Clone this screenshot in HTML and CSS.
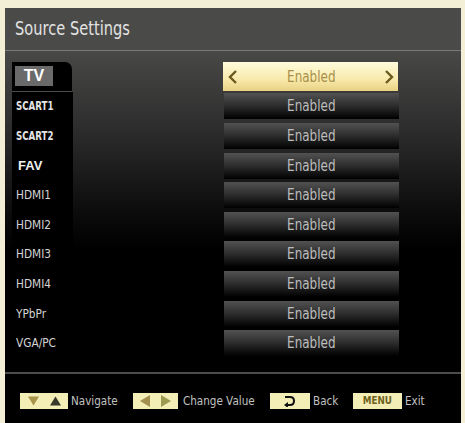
FILE: index.html
```html
<!DOCTYPE html>
<html lang="en">
<head>
  <meta charset="UTF-8">
  <title>Source Settings</title>
  <link rel="stylesheet" href="styles.css">
</head>
<body>
  <div class="screen">
    <div class="header"><span class="t">Source Settings</span></div>

    <div class="body">
      <div class="list">
        <div class="row">
          <div class="src first"><span class="tv">TV</span></div>
          <div class="val selected">
            <svg class="arrow" width="10" height="16" viewBox="0 0 10 16"><path d="M8 2 L2 8 L8 14" fill="none" stroke="#6b5a1e" stroke-width="2.4"/></svg>
            <span class="t">Enabled</span>
            <svg class="arrow" width="10" height="16" viewBox="0 0 10 16"><path d="M2 2 L8 8 L2 14" fill="none" stroke="#6b5a1e" stroke-width="2.4"/></svg>
          </div>
        </div>
        <div class="row">
          <div class="src bold"><span class="t">SCART1</span></div>
          <div class="val"><span class="t">Enabled</span></div>
        </div>
        <div class="row">
          <div class="src bold"><span class="t">SCART2</span></div>
          <div class="val"><span class="t">Enabled</span></div>
        </div>
        <div class="row">
          <div class="src wide">FAV</div>
          <div class="val"><span class="t">Enabled</span></div>
        </div>
        <div class="row">
          <div class="src"><span class="t">HDMI1</span></div>
          <div class="val"><span class="t">Enabled</span></div>
        </div>
        <div class="row">
          <div class="src"><span class="t">HDMI2</span></div>
          <div class="val"><span class="t">Enabled</span></div>
        </div>
        <div class="row">
          <div class="src"><span class="t">HDMI3</span></div>
          <div class="val"><span class="t">Enabled</span></div>
        </div>
        <div class="row">
          <div class="src"><span class="t">HDMI4</span></div>
          <div class="val"><span class="t">Enabled</span></div>
        </div>
        <div class="row">
          <div class="src"><span class="t">YPbPr</span></div>
          <div class="val"><span class="t">Enabled</span></div>
        </div>
        <div class="row">
          <div class="src"><span class="t">VGA/PC</span></div>
          <div class="val"><span class="t">Enabled</span></div>
        </div>
      </div>
    </div>

    <div class="footer">
      <div class="key k-nav">
        <svg width="11" height="10" viewBox="0 0 12 10"><path d="M0 0 H12 L6 10 Z" fill="#a8944a"/></svg>
        <svg width="11" height="10" viewBox="0 0 12 10"><path d="M0 10 H12 L6 0 Z" fill="#3a3828"/></svg>
      </div>
      <div class="hint h-nav"><span class="t">Navigate</span></div>

      <div class="key k-val">
        <svg width="10" height="12" viewBox="0 0 10 12"><path d="M10 0 V12 L0 6 Z" fill="#a39050"/></svg>
        <svg width="10" height="12" viewBox="0 0 10 12"><path d="M0 0 V12 L10 6 Z" fill="#9c9a50"/></svg>
      </div>
      <div class="hint h-val"><span class="t">Change Value</span></div>

      <div class="key k-back">
        <svg width="14" height="12" viewBox="0 0 14 12"><path d="M2 2 H7 Q11 2 11 6 Q11 10 7 10 H4" fill="none" stroke="#111" stroke-width="2"/><path d="M1 10 L5 7 V13 Z" fill="#111"/></svg>
      </div>
      <div class="hint h-back"><span class="t">Back</span></div>

      <div class="key k-menu"><span class="t">MENU</span></div>
      <div class="hint"><span class="t">Exit</span></div>
    </div>
  </div>
</body>
</html>
```

FILE: styles.css
```css
body {
  margin: 0;
  background: #f3efd6;
  font-family: "DejaVu Sans", sans-serif;
}
/* the TV font is a condensed face; squeeze the glyphs horizontally */
.t {
  display: inline-block;
  transform: scaleX(0.8);
  transform-origin: left center;
  white-space: nowrap;
}
.screen {
  margin: 8px 4px 0 5px;
  height: 415px;
  background: #000;
  display: flex;
  flex-direction: column;
}
.header {
  height: 42px;
  background: #4a4a48;
  border-bottom: 1px solid #7a7a78;
  color: #e2e2e2;
  font-size: 19px;
  line-height: 40px;
  padding-left: 10px;
}
.header .t {
  transform: scaleX(0.77);
}
.body {
  height: 321px;
  background: linear-gradient(#484847 0, #2c2c2c 25%, #0c0c0c 50%, #000 62%);
  border-bottom: 2px solid #4c4c4c;
}
.list {
  display: flex;
  flex-direction: column;
  padding-top: 11px;
}
.row {
  display: flex;
  align-items: center;
  height: 29.6px;
}
.src {
  width: 57px;
  height: 100%;
  margin-left: 7px;
  padding-left: 4px;
  background: #000;
  color: #d4d4d4;
  font-size: 12px;
  display: flex;
  align-items: center;
}
.src .t {
  transform: scaleX(0.88);
}
.src.first {
  border-radius: 0 7px 0 0;
  border-bottom: 1px solid #4a4a4a;
  padding-left: 3px;
}
.src.bold {
  font-weight: bold;
  color: #e4e4e4;
}
.src.bold .t {
  transform: scaleX(0.72);
}
.src.wide {
  font-family: "Liberation Sans", sans-serif;
  font-weight: bold;
  font-size: 13px;
  color: #f0f0f0;
  padding-left: 6px;
  width: 55px;
}
.tv {
  width: 38px;
  height: 20px;
  background: #6a6a6a;
  color: #fff;
  font-family: "Liberation Sans", sans-serif;
  font-weight: bold;
  font-size: 16px;
  display: flex;
  align-items: center;
  justify-content: center;
}
.val {
  margin-left: 151px;
  width: 175px;
  height: 26px;
  background: linear-gradient(#525252, #303030 45%, #000);
  color: #bdbdbd;
  font-size: 15px;
  display: flex;
  align-items: center;
  justify-content: center;
}
.val .t {
  transform-origin: center;
}
.val.selected {
  height: 29px;
  background: linear-gradient(#fffbdc, #f8eaac 60%, #e9d182);
  color: #a88f48;
  justify-content: space-between;
  padding: 0 4px 0 5px;
  box-sizing: border-box;
}
.arrow {
  display: block;
}
.footer {
  flex: 1;
  display: flex;
  align-items: center;
  padding-left: 15px;
  padding-top: 4px;
}
.key {
  height: 16px;
  flex-shrink: 0;
  background: #f3edb6;
  display: flex;
  align-items: center;
  justify-content: center;
  gap: 11px;
}
.k-nav { width: 48px; }
.k-val { width: 45px; }
.k-back { width: 40px; }
.k-menu {
  width: 49px;
  color: #6e6220;
  font-size: 11px;
  font-weight: bold;
}
.k-menu .t {
  transform-origin: center;
}
.hint {
  color: #c2c2c2;
  font-size: 13px;
  padding-left: 3px;
  box-sizing: border-box;
  flex-shrink: 0;
}
.h-nav { width: 65px; }
.h-val { width: 92px; padding-left: 5px; }
.h-back { width: 43px; }
```
